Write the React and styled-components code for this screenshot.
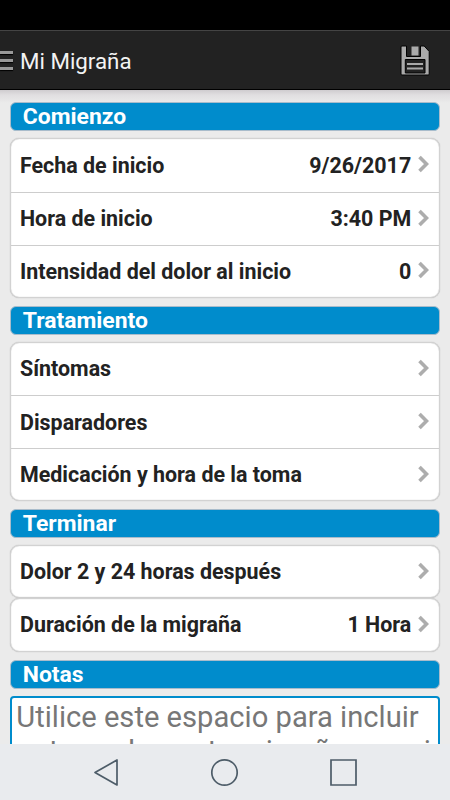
import React from 'react';
import styled, { createGlobalStyle } from 'styled-components';

const GlobalStyle = createGlobalStyle`
  * {
    box-sizing: border-box;
  }

  body {
    margin: 0;
    background: #ebebeb;
    font-family: Roboto, "Liberation Sans", sans-serif;
  }
`;

const Screen = styled.div`
  width: 450px;
  height: 800px;
  display: flex;
  flex-direction: column;
  overflow: hidden;
  background: #ebebeb;
`;

const StatusBar = styled.div`
  flex: none;
  height: 30px;
  background: #000;
`;

const Header = styled.header`
  flex: none;
  height: 60px;
  display: flex;
  align-items: center;
  padding-right: 20px;
  background: #222;
  border-top: 1px solid #444;
  border-bottom: 1px solid #000;

  h1 {
    flex: 1;
    margin: 2px 0 0 7px;
    color: #f3f3f3;
    font-size: 22.3px;
    font-weight: 400;
    line-height: 30px;
  }
`;

const MenuButton = styled.button`
  width: 13px;
  height: 20px;
  display: flex;
  flex-direction: column;
  justify-content: center;
  gap: 5px;
  padding: 0;
  border: 0;
  background: none;

  span {
    height: 3px;
    background: #999;
    box-shadow: 0 1px 1px #000;
  }
`;

const SaveButton = styled.button`
  display: flex;
  padding: 0;
  border: 0;
  background: none;
`;

const Content = styled.main`
  flex: 1;
  min-height: 0;
  padding: 12.3px 10.3px 0;
  overflow: hidden;
  background: linear-gradient(#cfcccf 0, #e0dee0 5px, #ebebeb 13px);
`;

const SectionTitle = styled.h2`
  height: 29px;
  margin: 0 0 7px;
  padding-left: 11.5px;
  border: 1px solid #a9bccb;
  border-radius: 6px;
  background: #008ccc;
  color: #fff;
  font-size: 22.9px;
  font-weight: 700;
  line-height: 28px;
`;

const Group = styled.ul`
  margin: 0 0 ${({ $gap }) => $gap || '8px'};
  padding: 0;
  list-style: none;
  background: #fff;
  border: 1px solid #d2d2d2;
  border-radius: 9px;
  box-shadow: 0 0 1px #aaa, inset 0 0 1px #bbb;
`;

const Row = styled.li`
  height: 53.3px;
  display: flex;
  align-items: center;
  padding: 0 9.5px 0 8.7px;
  color: #222;
  font-size: 21.43px;
  font-weight: 700;

  &:first-child {
    height: 52.4px;
  }

  &:last-child {
    height: 51.7px;
  }

  &:only-child {
    height: 51.3px;
  }

  & + & {
    border-top: 1px solid #cdcdcd;
  }

  svg {
    margin: -2px 0 0 7px;
  }
`;

const Label = styled.span`
  flex: 1;
`;

const Notes = styled.div`
  height: 80px;
  padding: 2px 4px;
  border: 2px solid #008ccc;
  border-radius: 4px;
  background: #fff;
  color: #777;
  font-size: 29.15px;
  line-height: 34.5px;
  white-space: pre;
`;

const NavBar = styled.nav`
  flex: none;
  height: 56px;
  background: #e9ebee;
`;

const Chevron = () => (
  <svg width="11" height="18" viewBox="0 0 11 18">
    <path d="M1.5 2l7 7-7 7" fill="none" stroke="#adadad" strokeWidth="3.6" />
  </svg>
);

const Item = ({ label, value }) => (
  <Row>
    <Label>{label}</Label>
    {value}
    <Chevron />
  </Row>
);

const App = () => (
  <Screen>
    <GlobalStyle />
    <StatusBar />
    <Header>
      <MenuButton aria-label="Menú">
        <span />
        <span />
        <span />
      </MenuButton>
      <h1>Mi Migraña</h1>
      <SaveButton aria-label="Guardar">
        <svg width="30" height="31" viewBox="0 0 30 31">
          <path d="M2 1h4.5v10.5h14V1h3.7l5 5.5v22.5q0 1-1 1H2q-1 0-1-1V2q0-1 1-1z" fill="#aaa" stroke="#000" />
          <path d="M11.5 1.5h7v9h-7z" fill="#aaa" />
          <path d="M5.3 14.5H25V28H5.3z" fill="#222" stroke="#000" />
          <path d="M7 19h16M7 23.5h16" stroke="#aaa" strokeWidth="2" />
        </svg>
      </SaveButton>
    </Header>
    <Content>
      <SectionTitle>Comienzo</SectionTitle>
      <Group>
        <Item label="Fecha de inicio" value="9/26/2017" />
        <Item label="Hora de inicio" value="3:40 PM" />
        <Item label="Intensidad del dolor al inicio" value="0" />
      </Group>
      <SectionTitle>Tratamiento</SectionTitle>
      <Group>
        <Item label="Síntomas" />
        <Item label="Disparadores" />
        <Item label="Medicación y hora de la toma" />
      </Group>
      <SectionTitle>Terminar</SectionTitle>
      <Group $gap="0">
        <Item label="Dolor 2 y 24 horas después" />
      </Group>
      <Group>
        <Item label="Duración de la migraña" value="1 Hora" />
      </Group>
      <SectionTitle>Notas</SectionTitle>
      <Notes>{'Utilice este espacio para incluir\nnotas sobre esta migraña que si'}</Notes>
    </Content>
    <NavBar>
      <svg width="450" height="56" viewBox="0 0 450 56" fill="none" stroke="#4d5c68" strokeWidth="1.7">
        <path d="M95 28.5L117 16v25z" strokeLinejoin="round" />
        <circle cx="224.5" cy="28.5" r="12.7" />
        <path d="M331 16h25v25h-25z" />
      </svg>
    </NavBar>
  </Screen>
);

export default App;
